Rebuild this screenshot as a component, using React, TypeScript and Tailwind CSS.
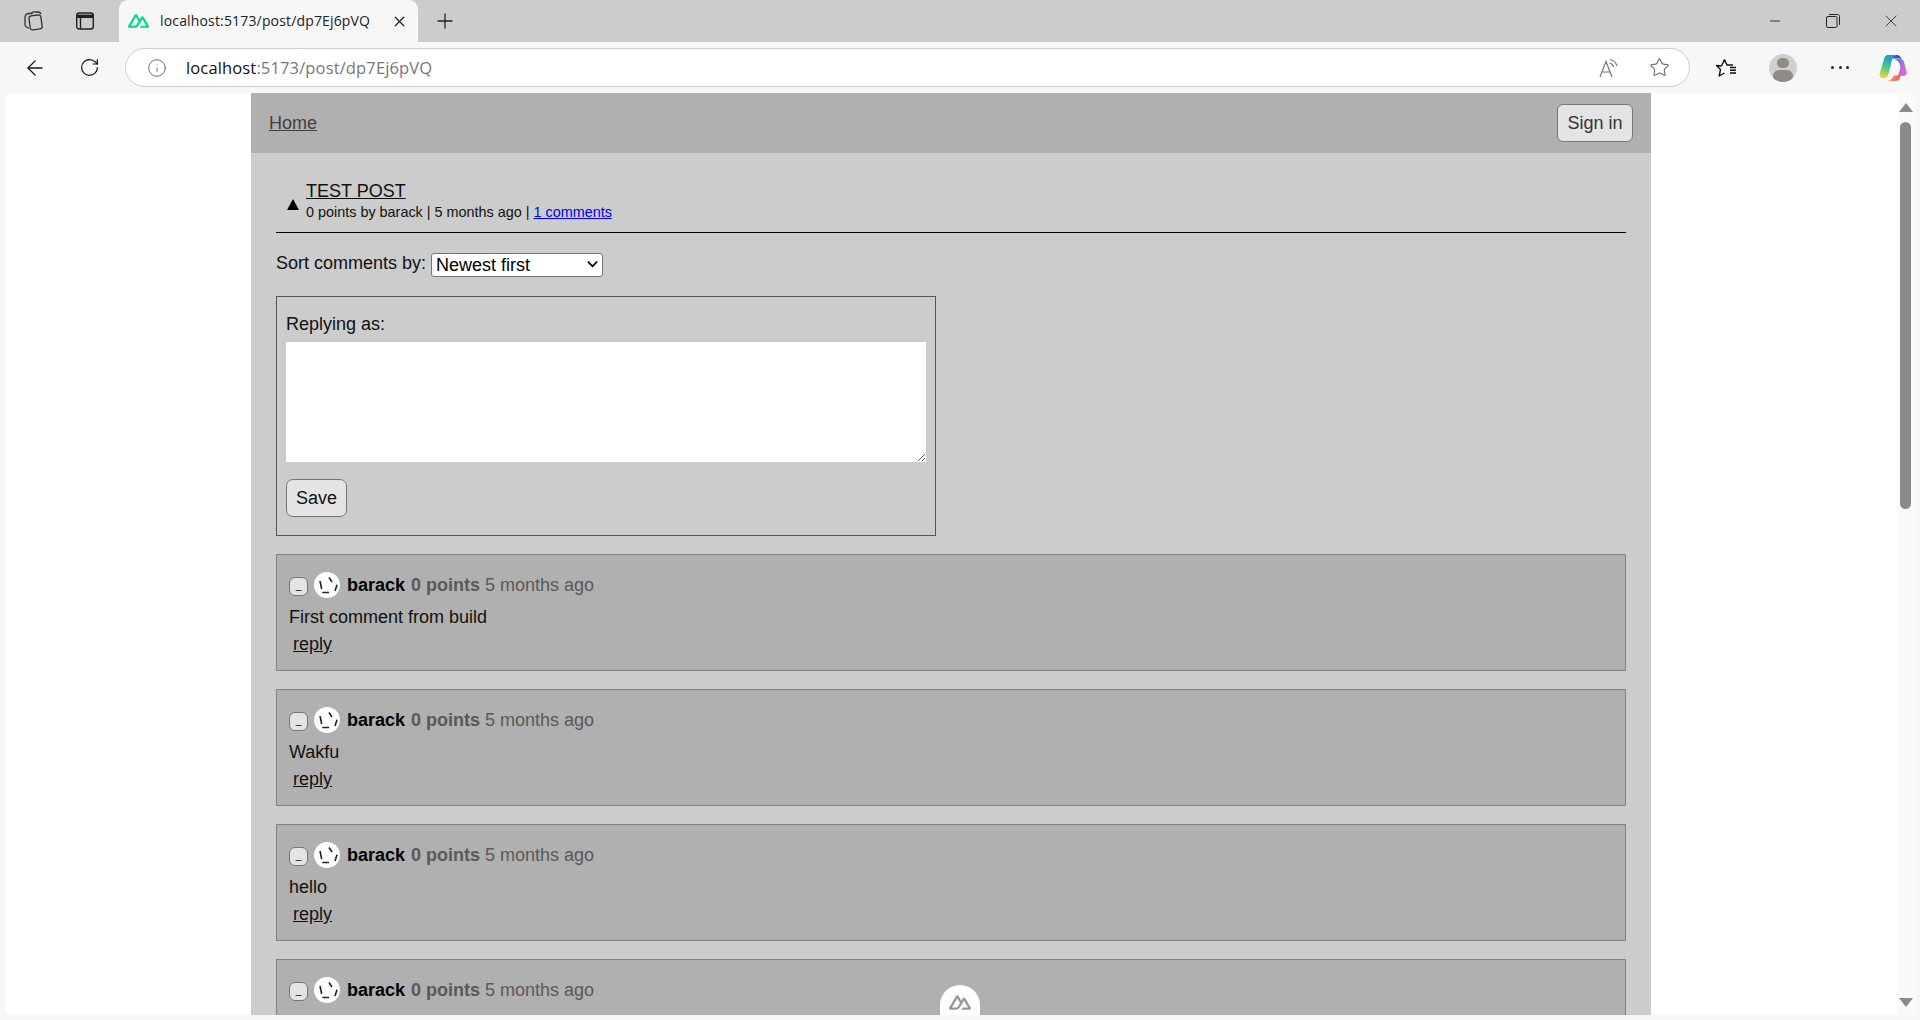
import { ArrowLeft, Info, Minus, Plus, RotateCw, Star, X } from "lucide-react";

const comments = ["First comment from build", "Wakfu", "hello", "mod"];

const nuxtPath = "M13.4642 19.8295h8.9218c.2834 0 .5618-.0723.8072-.2098a1.5899 1.5899 0 0 0 .5908-.5732 1.5293 1.5293 0 0 0 .216-.783 1.529 1.529 0 0 0-.2167-.7828L17.7916 7.4142a1.5904 1.5904 0 0 0-.5907-.573 1.6524 1.6524 0 0 0-.807-.2099c-.2833 0-.5616.0724-.807.2098a1.5904 1.5904 0 0 0-.5907.5731L13.4642 9.99l-2.9954-5.0366a1.5913 1.5913 0 0 0-.591-.573 1.6533 1.6533 0 0 0-.8071-.2098c-.2834 0-.5617.0723-.8072.2097a1.5913 1.5913 0 0 0-.591.573L.2168 17.4808A1.5292 1.5292 0 0 0 0 18.2635c-.0001.2749.0744.545.216.783a1.59 1.59 0 0 0 .5908.5732c.2454.1375.5238.2098.8072.2098h5.6003c2.219 0 3.8554-.9454 4.9813-2.7899l2.7337-4.5922L16.3935 9.99l4.3944 7.382h-5.8586ZM7.123 17.3694l-3.9083-.0009 5.8586-9.8421 2.9232 4.921-1.9572 3.2892c-.7478 1.1967-1.5972 1.6328-2.9163 1.6328z";

function NuxtMark({ className, fill }: { className: string; fill: string }) {
    return (
        <svg viewBox="0 4 24 16" className={className} fill={fill}>
            <path d={nuxtPath} />
        </svg>
    );
}

function CopilotIcon() {
    return (
        <svg viewBox="0 0 28 28" className="w-[28px] h-[28px]">
            <defs>
                <linearGradient id="cpA" x1="0.6" y1="0" x2="0.3" y2="1">
                    <stop offset="0" stopColor="#1f8fe8" />
                    <stop offset="0.5" stopColor="#44c88a" />
                    <stop offset="1" stopColor="#f0d040" />
                </linearGradient>
                <linearGradient id="cpB" x1="0.2" y1="0" x2="0.8" y2="1">
                    <stop offset="0" stopColor="#7c6cf0" />
                    <stop offset="1" stopColor="#e56cc8" />
                </linearGradient>
                <linearGradient id="cpC" x1="0" y1="0" x2="1" y2="0">
                    <stop offset="0" stopColor="#f9a23c" />
                    <stop offset="1" stopColor="#f0508c" />
                </linearGradient>
            </defs>
            <path d="M9 1h8c-2 0-3 1.500-3.600 3.500L9.500 20c-.6 2-2 4-4.500 4H4C1.500 24 0 22 .7 19.500L5 5C5.800 2.500 7 1 9 1z" fill="url(#cpA)" />
            <path d="M13 1h5c2 0 3.500 1 4 3l.5 2c-.5-1-1.500-1.500-3-1.500h-6.300C13.500 3 14.500 1.500 17 1z" fill="#2060d0" />
            <path d="M15 5h6c2 0 3.500 1.200 4 3l2.600 9.500c.7 2.500-.7 4.500-3.200 4.500H19l2-7c.6-2 .2-4-.8-6-.9-1.900-2.700-3.400-5.200-4z" fill="url(#cpB)" />
            <path d="M8 27h9c2 0 3.500-1.500 4-3.500l1.500-5.500c-.6 2-2 3.500-4.500 3.500h-3l-2 3c-1 1.500-2.500 2.500-5 2.500z" fill="url(#cpC)" />
        </svg>
    );
}

function TabStrip() {
    return (
        <div className="h-[42px] flex bg-[#cccccc] shrink-0 items-center">
            <div className="w-[66px] flex justify-center">
                <svg viewBox="0 0 22 22" className="w-[22px] h-[22px]" fill="none" stroke="#333" strokeWidth="1.3" strokeLinejoin="round">
                    <rect x="7.500" y="5.500" width="12" height="14" rx="2.500" transform="rotate(-8 13 12)" />
                    <path d="M7 18.500 4.500 17c-1-.6-1.500-1.500-1.500-2.500V7.500C3 5 4.500 3.500 7 3.500h3.500" />
                    <path d="M9.500 3c.8-.8 2-1.200 3.500-1h3c1.300 0 2.500.7 3 2" />
                </svg>
            </div>
            <div className="w-[38px] flex justify-center">
                <svg viewBox="0 0 20 20" className="w-[20px] h-[20px]" fill="none" stroke="#222" strokeWidth="1.400">
                    <rect x="1.700" y="2" width="16.600" height="16" rx="2.500" />
                    <path d="M1.700 5.300h16.600" strokeWidth="3.500" />
                    <path d="M5.500 6v12" />
                </svg>
            </div>
            <div className="ml-[15px] w-[299px] h-full bg-[#f7f7f7] rounded-t-[9px] flex items-center pl-[9px] pr-[10px] font-['Open_Sans',sans-serif]">
                <NuxtMark className="w-[21px] h-[14px] shrink-0" fill="#00dc82" />
                <span className="ml-[11px] flex-1 text-[14px] leading-none text-[#222] tracking-[0.16px] whitespace-nowrap">localhost:5173/post/dp7Ej6pVQ</span>
                <X className="w-[17px] h-[17px] text-[#222]" strokeWidth={1.800} />
            </div>
            <div className="ml-[15px]">
                <Plus className="w-[24px] h-[24px] text-[#222]" strokeWidth={1.300} />
            </div>
            <div className="ml-auto flex items-center">
                <div className="w-[58px] flex justify-center"><Minus className="w-[16px] h-[16px] text-[#222]" strokeWidth={1.300} /></div>
                <div className="w-[58px] flex justify-center">
                    <svg viewBox="0 0 14 14" className="w-[14px] h-[14px]" fill="none" stroke="#222" strokeWidth="1">
                        <rect x="0.500" y="2.500" width="10.500" height="11" rx="1.500" />
                        <path d="M3 .5h8.500c1.200 0 2 .8 2 2V11" />
                    </svg>
                </div>
                <div className="w-[58px] flex justify-center"><X className="w-[20px] h-[20px] text-[#222]" strokeWidth={1} /></div>
            </div>
        </div>
    );
}

function Toolbar() {
    return (
        <div className="h-[51px] flex bg-[#f7f7f7] shrink-0 items-center">
            <div className="w-[69px] flex justify-center"><ArrowLeft className="w-[24px] h-[24px] text-[#1a1a1a]" strokeWidth={1.300} /></div>
            <div className="w-[41px] flex justify-center"><RotateCw className="w-[21px] h-[21px] text-[#1a1a1a]" strokeWidth={1.400} /></div>
            <div className="ml-[15px] w-[1565px] h-[39px] bg-white border border-[#cdcdcd] rounded-full flex items-center pl-[21px] pr-[19px] font-['Open_Sans',sans-serif]">
                <Info className="w-[20px] h-[20px] text-[#666]" strokeWidth={1.100} />
                <span className="ml-[19px] pt-[1px] text-[16.500px] leading-none tracking-[0.14px] text-[#777] whitespace-nowrap"><span className="text-[#111]">localhost</span>:5173/post/dp7Ej6pVQ</span>
                <div className="ml-auto flex items-center gap-[30px]">
                    <svg viewBox="0 0 20 20" className="w-[20px] h-[20px]" fill="none" stroke="#777" strokeWidth="1.200">
                        <path d="M1 19 7 3.500 13 19M3 14h8" />
                        <path d="M11 1.500c3.500.5 6 3 7 6.500M10.500 5c2 .4 3.500 1.800 4.300 4" />
                    </svg>
                    <Star className="w-[21px] h-[21px] text-[#666]" strokeWidth={1.200} />
                </div>
            </div>
            <div className="ml-[24px] w-[24px] flex justify-center">
                <svg viewBox="0 0 22 20" className="w-[22px] h-[20px]" fill="none" stroke="#111" strokeWidth="1.400" strokeLinejoin="round">
                    <path d="M9.500 1.500 12 7h-.2H18M6.500 8l-5-.5 4 4-1.300 6.500 5.300-3M15 12.200h6M15 9.500h6M15 15h6M6.500 8l3-6.500" />
                </svg>
            </div>
            <div className="ml-[31px] w-[28px] h-[28px] rounded-full bg-[#d2d0cc] flex flex-col items-center overflow-hidden">
                <div className="mt-[4px] w-[12px] h-[12px] rounded-full bg-[#8f8c87]" />
                <div className="mt-[2px] w-[20px] h-[14px] rounded-full bg-[#8f8c87]" />
            </div>
            <div className="ml-[32px] w-[22px] flex justify-between px-[2px]">
                <span className="w-[3px] h-[3px] rounded-full bg-[#222]" />
                <span className="w-[3px] h-[3px] rounded-full bg-[#222]" />
                <span className="w-[3px] h-[3px] rounded-full bg-[#222]" />
            </div>
            <div className="ml-[28px]"><CopilotIcon /></div>
        </div>
    );
}

function Comment({ text }: { text: string }) {
    return (
        <div className="mt-[18px] first:mt-0 h-[117px] shrink-0 bg-[#b0b0b0] border border-[#808080] px-[12px] pt-[17px]">
            <div className="flex items-center h-[26px]">
                <button className="mt-[2px] w-[19px] h-[19px] bg-[#e4e4e4] border border-[#767676] rounded-[6px] text-[10px] leading-[16px] text-black">_</button>
                <div className="ml-[6px] w-[26px] h-[26px] rounded-full bg-white flex items-center justify-center">
                    <svg viewBox="0 0 26 26" className="w-[26px] h-[26px]" fill="none" stroke="#222" strokeWidth="1.600">
                        <path d="M6 9 7.700 17M15 5.500 18 10M23 12.700 21 19M8.300 20.500H15" />
                    </svg>
                </div>
                <span className="ml-[7px] font-bold text-black">barack</span>
                <span className="ml-[6px] font-bold text-[#595959]">0 points</span>
                <span className="ml-[5px] text-[#595959]">5 months ago</span>
            </div>
            <p className="mt-[8px] leading-[22px] text-[#111]">{text}</p>
            <a className="ml-[4px] block mt-[5px] leading-[22px] underline text-[#111]">reply</a>
        </div>
    );
}

function PageContent() {
    return (
        <div className="w-[1400px] mx-auto h-full bg-[#cccccc] flex flex-col overflow-hidden text-[18px] font-['Liberation_Sans',Arial,sans-serif]">
            <header className="h-[60px] shrink-0 bg-[#b0b0b0] flex items-center justify-between pl-[18px] pr-[18px]">
                <a className="underline text-[#404040] leading-none">Home</a>
                <button className="w-[76px] h-[38px] bg-[#e4e4e4] border border-[#767676] rounded-[6px] text-[#333] leading-none">Sign in</button>
            </header>
            <div className="px-[25px] flex flex-col flex-1 min-h-0">
                <div className="mt-[27px] flex items-center h-[42px]">
                    <span className="w-[12px] ml-[11px] mt-[7px] border-x-[6px] border-b-[11px] border-x-transparent border-b-black" />
                    <div className="ml-[7px]">
                        <a className="block underline text-[#111] leading-[22px]">TEST POST</a>
                        <div className="text-[14.400px] leading-[20px] text-[#111]">0 points by barack | 5 months ago | <a className="underline text-[#0000ee]">1 comments</a></div>
                    </div>
                </div>
                <div className="mt-[10px] h-[1px] bg-black shrink-0" />
                <div className="mt-[18px] h-[25px] flex items-center shrink-0">
                    <span className="text-[#111]">Sort comments by:</span>
                    <div className="relative ml-[5px] w-[172px] h-[24px]">
                        <select className="w-full h-full bg-white border border-[#767676] rounded-[3px] text-black pl-[4px] leading-none appearance-none">
                            <option>Newest first</option>
                        </select>
                        <svg viewBox="0 0 12 8" className="absolute right-[5px] top-[8px] w-[11px] h-[8px] pointer-events-none" fill="none" stroke="#000" strokeWidth="2">
                            <path d="M1 1.500 6 6.500 11 1.500" />
                        </svg>
                    </div>
                </div>
                <div className="mt-[20px] w-[660px] h-[240px] shrink-0 border border-[#555] px-[9px] pt-[16px]">
                    <div className="leading-[22px] text-[#111]">Replying as:</div>
                    <textarea className="mt-[7px] block w-[640px] h-[120px] bg-white" />
                    <button className="mt-[17px] block w-[61px] h-[38px] bg-[#e4e4e4] border border-[#767676] rounded-[7px] text-[#111] leading-none">Save</button>
                </div>
                <div className="mt-[18px] flex flex-col">
                    {comments.map((c, i) => <Comment key={i} text={c} />)}
                </div>
            </div>
        </div>
    );
}

function ScrollBar() {
    return (
        <div className="w-[19px] shrink-0 flex flex-col items-center pt-[10px] pb-[8px] pr-[2px] bg-[#fafafa]">
            <span className="border-x-[7px] border-b-[9px] border-x-transparent border-b-[#8a8a8a]" />
            <div className="mt-[10px] w-[11px] h-[387px] rounded-full bg-[#8a8a8a]" />
            <span className="mt-auto border-x-[7px] border-t-[9px] border-x-transparent border-t-[#8a8a8a]" />
        </div>
    );
}

export default function App() {
    return (
        <div className="w-[1920px] h-[1020px] flex flex-col bg-[#f7f7f7] overflow-hidden">
            <TabStrip />
            <Toolbar />
            <div className="relative ml-[5px] mr-[4px] h-[922px] shrink-0 bg-white rounded-[8px] overflow-hidden flex">
                <div className="flex-1 min-w-0"><PageContent /></div>
                <ScrollBar />
                <div className="absolute left-[935px] bottom-0 w-[40px] h-[30px] bg-white rounded-t-full flex items-center justify-center pt-[5px]">
                    <NuxtMark className="w-[22px] h-[15px]" fill="#999" />
                </div>
            </div>
        </div>
    );
}
